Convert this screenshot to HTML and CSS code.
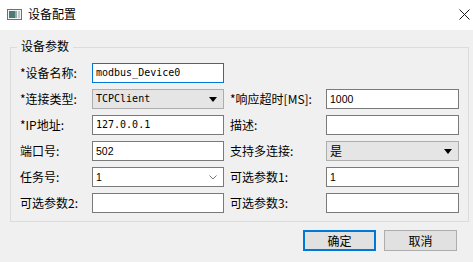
FILE: index.html
```html
<!DOCTYPE html>
<html lang="zh-CN">
<head>
<meta charset="utf-8">
<title>设备配置</title>
<link rel="stylesheet" href="styles.css">
</head>
<body>
<div class="window">
  <div class="titlebar">
    <svg class="app-icon" width="15" height="11" viewBox="0 0 15 11">
      <rect x="0.5" y="0.5" width="14" height="10" fill="#f4f4f4" stroke="#6f6f6f"/>
      <rect x="2" y="2" width="6" height="7" fill="#4d7a74"/>
      <rect x="8" y="2" width="2" height="7" fill="#8fb0aa"/>
      <rect x="11" y="2" width="2" height="7" fill="#c8c8c8"/>
    </svg>
    <span class="title">设备配置</span>
    <svg class="close" width="11" height="11" viewBox="0 0 11 11">
      <path d="M0.5 0.5 L10.5 10.5 M10.5 0.5 L0.5 10.5" stroke="#1a1a1a" stroke-width="1"/>
    </svg>
  </div>
  <div class="content">
    <div class="group">
      <span class="legend">设备参数</span>
      <div class="grid">
        <div class="label">*设备名称:</div>
        <div class="field focus"><span class="mono">modbus_Device0</span></div>
        <div class="label right">&nbsp;</div>
        <div class="spacer"></div>

        <div class="label">*连接类型:</div>
        <div class="field combo"><span class="mono">TCPClient</span>
          <svg class="arrow" width="8" height="5" viewBox="0 0 8 5"><path d="M0 0 H8 L4 5 Z" fill="#000"/></svg>
        </div>
        <div class="label right">*响应超时[MS]:</div>
        <div class="field"><span class="num">1000</span></div>

        <div class="label">*IP地址:</div>
        <div class="field"><span class="mono">127.0.0.1</span></div>
        <div class="label right">描述:</div>
        <div class="field"></div>

        <div class="label">端口号:</div>
        <div class="field"><span class="num">502</span></div>
        <div class="label right">支持多连接:</div>
        <div class="field combo"><span class="cjk">是</span>
          <svg class="arrow" width="8" height="5" viewBox="0 0 8 5"><path d="M0 0 H8 L4 5 Z" fill="#000"/></svg>
        </div>

        <div class="label">任务号:</div>
        <div class="field editable"><span class="num">1</span>
          <svg class="chevron" width="8" height="5" viewBox="0 0 8 5"><path d="M0.5 0.5 L4 4 L7.5 0.5" fill="none" stroke="#7a7a7a" stroke-width="1"/></svg>
        </div>
        <div class="label right">可选参数1:</div>
        <div class="field"><span class="num">1</span></div>

        <div class="label">可选参数2:</div>
        <div class="field"></div>
        <div class="label right">可选参数3:</div>
        <div class="field"></div>
      </div>
    </div>
    <div class="buttons">
      <div class="btn primary">确定</div>
      <div class="btn">取消</div>
    </div>
  </div>
</div>
</body>
</html>
```
FILE: styles.css
```css
html, body {
  margin: 0;
  padding: 0;
}
body {
  width: 473px;
  height: 262px;
  overflow: hidden;
  background: #f0f0f0;
  font-family: "Noto Sans CJK SC", "Noto Sans", sans-serif;
  font-size: 12px;
  color: #000;
}
.window {
  width: 473px;
  height: 262px;
}
.titlebar {
  height: 30px;
  background: #fff;
  display: flex;
  align-items: center;
  padding-left: 7px;
  padding-bottom: 2px;
  box-sizing: border-box;
}
.app-icon {
  display: block;
}
.title {
  margin-left: 6px;
  line-height: 14px;
}
.close {
  display: block;
  margin-left: auto;
  margin-right: 3px;
}
.content {
  padding: 17px 4px 0 10px;
}
.group {
  position: relative;
  border: 1px solid #dcdcdc;
  padding: 15px 9px 8px 9px;
}
.legend {
  position: absolute;
  left: 6px;
  top: -9px;
  padding: 0 4px;
  line-height: 14px;
  background: #f0f0f0;
}
.grid {
  display: grid;
  grid-template-columns: 72px 132px 102px 133px;
  grid-auto-rows: 20px;
  row-gap: 6px;
}
.label {
  display: flex;
  align-items: center;
  line-height: 14px;
  white-space: nowrap;
}
.label.right {
  padding-left: 6px;
}
.field {
  box-sizing: border-box;
  height: 20px;
  border: 1px solid #7a7a7a;
  background: #fff;
  padding-left: 3px;
  padding-right: 6px;
  display: flex;
  align-items: center;
  justify-content: space-between;
}
.field.focus {
  border-color: #0078d7;
}
.field.combo {
  background: #e5e5e5;
  border-color: #adadad;
}
.arrow, .chevron {
  display: block;
}
.mono {
  font-family: "DejaVu Sans Mono", "Liberation Mono", monospace;
  font-size: 10px;
  line-height: 12px;
}
.num {
  font-family: "Liberation Sans", Arial, sans-serif;
  font-size: 10.5px;
  line-height: 12px;
}
.cjk {
  line-height: 14px;
}
.buttons {
  display: flex;
  justify-content: flex-end;
  gap: 8px;
  margin-top: 8px;
  margin-right: 12px;
}
.btn {
  box-sizing: border-box;
  width: 73px;
  height: 21px;
  border: 1px solid #adadad;
  background: #e1e1e1;
  display: flex;
  align-items: center;
  justify-content: center;
  line-height: 14px;
}
.btn.primary {
  border: 2px solid #0078d7;
}
```
